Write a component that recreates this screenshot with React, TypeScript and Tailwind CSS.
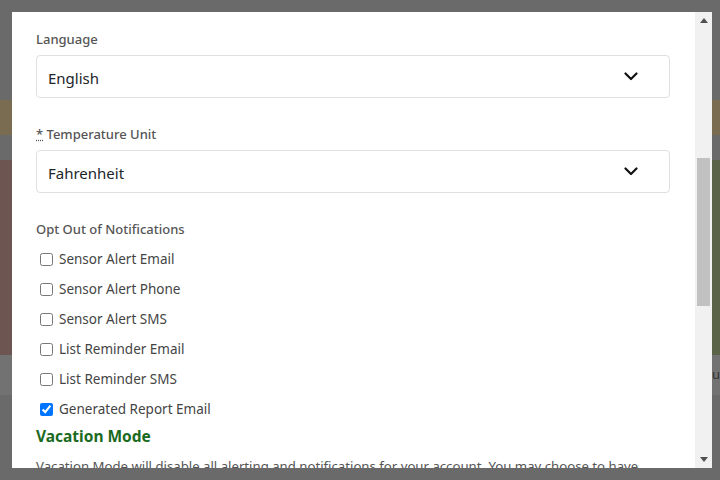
import React from "react";

const font = { fontFamily: '"Noto Sans", "Open Sans", Arial, sans-serif' };

function Chevron() {
  return (
    <svg width="14" height="9" viewBox="0 0 14 9" className="block">
      <path d="M1.5 1.5 L7 7 L12.5 1.5" fill="none" stroke="#111" strokeWidth="2.2" strokeLinecap="round" strokeLinejoin="round" />
    </svg>
  );
}

function Select({ value }: { value: string }) {
  return (
    <div className="mt-[6px] flex h-[43px] items-center justify-between rounded-[4px] border border-[#e0e0e0] pl-[11px] pr-[31px]">
      <span className="pt-[3px] text-[15px] text-[#212529]">{value}</span>
      <Chevron />
    </div>
  );
}

const items: [string, boolean][] = [
  ["Sensor Alert Email", false],
  ["Sensor Alert Phone", false],
  ["Sensor Alert SMS", false],
  ["List Reminder Email", false],
  ["List Reminder SMS", false],
  ["Generated Report Email", true],
];

export default function App() {
  return (
    <div className="relative h-[480px] w-[720px] overflow-hidden bg-[#6a6a6a]" style={font}>
      <div className="flex flex-col">
        <div className="h-[100px]" />
        <div className="h-[35px] bg-[#7a6c50]" />
        <div className="h-[25px]" />
        <div className="flex h-[195px] justify-between">
          <div className="w-[300px] bg-[#6d5551]" />
          <div className="w-[300px] bg-[#5a6347]" />
        </div>
        <div className="flex h-[40px] justify-between bg-[#727272]">
          <div />
          <div className="pt-[10px] text-[13px] text-[#333]">u</div>
        </div>
      </div>

      <div className="absolute left-[12px] top-[12px] flex h-[456px] w-[700px]">
        <div className="flex-1 overflow-hidden bg-white pl-[24px] pr-[25px] pt-[17px]">
          <div className="text-[13px] font-medium leading-[20px] text-[#555]">Language</div>
          <Select value="English" />
          <div className="mt-[26px] text-[13px] font-medium leading-[20px] text-[#555]">
            <abbr title="required" className="underline decoration-dotted">*</abbr> Temperature Unit
          </div>
          <Select value="Fahrenheit" />
          <div className="mt-[26px] text-[13px] font-medium leading-[20px] text-[#555]">Opt Out of Notifications</div>
          <div className="mt-[5px] flex flex-col">
            {items.map(([label, checked]) => (
              <label key={label} className="flex h-[30px] items-center text-[13.5px] text-[#444]">
                <input
                  type="checkbox"
                  defaultChecked={checked}
                  className="ml-[4px] mr-[6px] h-[13px] w-[13px] accent-[#0075ff]"
                />
                {label}
              </label>
            ))}
          </div>
          <div className="mt-[2px] text-[15.5px] font-bold leading-[20px] text-[#1b6a1f]">Vacation Mode</div>
          <p className="mt-[10px] whitespace-nowrap text-[13.2px] leading-[20px] text-[#555]">
            Vacation Mode will disable all alerting and notifications for your account. You may choose to have
          </p>
        </div>
        <div className="flex w-[17px] flex-col items-center bg-[#f1f1f1]">
          <div className="flex h-[17px] items-center justify-center">
            <svg width="8" height="5" viewBox="0 0 8 5"><path d="M0 5 L4 0 L8 5 Z" fill="#505050" /></svg>
          </div>
          <div className="h-[129px]" />
          <div className="h-[148px] w-[13px] bg-[#c1c1c1]" />
          <div className="flex-1" />
          <div className="flex h-[17px] items-center justify-center">
            <svg width="8" height="5" viewBox="0 0 8 5"><path d="M0 0 L8 0 L4 5 Z" fill="#505050" /></svg>
          </div>
        </div>
      </div>
    </div>
  );
}
